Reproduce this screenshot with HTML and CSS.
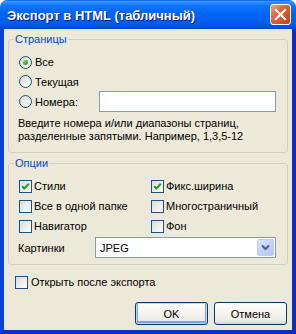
FILE: index.html
```html
<html>
<head>
    <link rel="stylesheet" href="styles.css">
</head>
<body>
    <div class="window">
        <div class="titlebar">
            <span class="title">Экспорт в HTML (табличный)</span>
            <span class="close">
                <svg width="19" height="19" viewBox="0 0 19 19">
                    <path d="M5 5 L14 14 M14 5 L5 14" stroke="#fff" stroke-width="2.2" stroke-linecap="square"/>
                </svg>
            </span>
        </div>
        <div class="frame">
            <fieldset class="group pages">
                <legend>Страницы</legend>
                <div class="rows">
                    <label class="row"><span class="radio checked"></span>Все</label>
                    <label class="row short"><span class="radio"></span>Текущая</label>
                    <div class="row tall">
                        <label class="numbers"><span class="radio"></span>Номера:</label>
                        <span class="edit"></span>
                    </div>
                </div>
                <p class="hint">Введите номера и/или диапазоны страниц,<br>разделенные запятыми. Например, 1,3,5-12</p>
            </fieldset>
            <fieldset class="group options">
                <legend>Опции</legend>
                <div class="checks">
                    <label class="row"><span class="check checked"></span>Стили</label>
                    <label class="row"><span class="check checked"></span>Фикс.ширина</label>
                    <label class="row"><span class="check"></span>Все в одной папке</label>
                    <label class="row"><span class="check"></span>Многостраничный</label>
                    <label class="row"><span class="check"></span>Навигатор</label>
                    <label class="row"><span class="check"></span>Фон</label>
                </div>
                <div class="row tall pictures">
                    <span class="pictures-label">Картинки</span>
                    <div class="combo">
                        <span class="combo-text">JPEG</span>
                        <span class="drop">
                            <svg width="15" height="15" viewBox="0 0 15 15">
                                <path d="M4 5.5 L7.5 9 L11 5.5" fill="none" stroke="#4d6185" stroke-width="2"/>
                            </svg>
                        </span>
                    </div>
                </div>
            </fieldset>
            <label class="row open"><span class="check"></span>Открыть после экспорта</label>
            <div class="buttons">
                <button class="btn default">OK</button>
                <button class="btn">Отмена</button>
            </div>
        </div>
    </div>
</body>
</html>
```
FILE: styles.css
```css
body {
    margin: 0;
    background-color: #ffffff;
    font-family: "Liberation Sans", Arial, sans-serif;
    font-size: 11px;
    color: #000;
}
.window {
    width: 296px;
    height: 334px;
    display: flex;
    flex-direction: column;
    background-color: #ece9d8;
    border-radius: 7px 7px 0 0;
    overflow: hidden;
}
.titlebar {
    height: 29px;
    flex: none;
    display: flex;
    align-items: center;
    padding: 0 5px 0 7px;
    background: linear-gradient(to bottom, #0058ee 0%, #3d95ff 5%, #2b8bff 9%, #0f74fb 20%, #0066f4 45%, #0060ef 70%, #0058e4 88%, #0046cf 100%);
}
.title {
    flex: 1;
    color: #fff;
    font-weight: bold;
    font-size: 13px;
    text-shadow: 1px 1px #0a1883;
    padding-top: 1px;
}
.close {
    width: 21px;
    height: 21px;
    box-sizing: border-box;
    border: 1px solid #fff;
    border-radius: 3px;
    background: linear-gradient(135deg, #f3a58d 0%, #e4683f 35%, #d24d26 75%, #c4401c 100%);
    display: flex;
    align-items: center;
    justify-content: center;
}
.frame {
    flex: 1;
    display: flex;
    flex-direction: column;
    border: 4px solid #0a3fd3;
    border-top: none;
    border-left-color: #0842d8;
    border-right-color: #0831c9;
    border-bottom-color: #0831c9;
}
.group {
    margin: 4px 4px 0;
    padding: 0 10px 9px 5px;
    border: 1px solid #d0d0bf;
    border-radius: 3px;
    min-width: 0;
}
.group.options {
    padding-bottom: 6px;
}
.group legend {
    color: #0046d5;
    padding: 0 1px;
    line-height: 13px;
}
.rows {
    padding-top: 6px;
}
.row {
    display: flex;
    align-items: center;
    height: 20px;
    padding-left: 5px;
    white-space: nowrap;
}
.row.short {
    height: 19px;
}
.row.tall {
    height: 21px;
}
.numbers {
    display: flex;
    align-items: center;
    width: 80px;
}
.edit {
    width: 177px;
    height: 21px;
    box-sizing: border-box;
    border: 1px solid #7f9db9;
    background-color: #fff;
}
.hint {
    margin: 5px 0 0 4px;
    line-height: 13px;
}
.radio {
    width: 13px;
    height: 13px;
    box-sizing: border-box;
    border: 1px solid #1c5180;
    border-radius: 50%;
    background: linear-gradient(135deg, #d4d3cc 0%, #f2f2ee 55%, #ffffff 100%);
    margin-right: 3px;
    display: flex;
    align-items: center;
    justify-content: center;
}
.radio.checked::after {
    content: "";
    width: 5px;
    height: 5px;
    border-radius: 50%;
    background: radial-gradient(circle at 35% 35%, #6ee06a 0%, #2bb02a 50%, #138f12 100%);
}
.check {
    width: 13px;
    height: 13px;
    box-sizing: border-box;
    border: 1px solid #1c5180;
    background: linear-gradient(135deg, #dcdcd7 0%, #f0f0ec 60%, #ffffff 100%);
    margin-right: 2px;
    flex: none;
}
.check.checked {
    background-image: url("data:image/svg+xml,%3Csvg xmlns='http://www.w3.org/2000/svg' width='11' height='11'%3E%3Cpath d='M2.2 5.2 L4.3 7.4 L8.8 2.8' fill='none' stroke='%2321a121' stroke-width='2.1'/%3E%3C/svg%3E"), linear-gradient(135deg, #dcdcd7 0%, #f0f0ec 60%, #ffffff 100%);
}
.checks {
    display: grid;
    grid-template-columns: 132px 1fr;
    grid-auto-rows: 20px;
    padding-top: 6px;
}
.pictures {
    margin-top: 1px;
    padding-left: 4px;
}
.pictures-label {
    width: 77px;
}
.combo {
    width: 181px;
    height: 21px;
    box-sizing: border-box;
    border: 1px solid #7f9db9;
    background-color: #fff;
    display: flex;
    align-items: center;
    padding: 1px;
}
.combo-text {
    flex: 1;
    padding-left: 3px;
}
.drop {
    width: 17px;
    height: 17px;
    box-sizing: border-box;
    border: 1px solid #bccef8;
    border-radius: 2px;
    background: linear-gradient(135deg, #dae5fe 0%, #c1d3fb 50%, #b2c7f7 100%);
    display: flex;
    align-items: center;
    justify-content: center;
}
.row.open {
    margin-top: 7px;
    padding-left: 11px;
}
.row.open .check {
    margin-right: 3px;
}
.buttons {
    display: flex;
    justify-content: flex-end;
    gap: 6px;
    margin-top: 10px;
    padding-right: 5px;
}
.btn {
    width: 73px;
    height: 23px;
    box-sizing: border-box;
    border: 1px solid #003c74;
    border-radius: 3px;
    background: linear-gradient(to bottom, #ffffff 0%, #f6f5f0 40%, #ecebe4 85%, #d6d0c5 100%);
    font-family: "Liberation Sans", Arial, sans-serif;
    font-size: 11px;
    color: #000;
    padding: 0;
}
.btn.default {
    box-shadow: inset 0 0 0 1px #c2d5fc, inset 0 -1px 0 2px #7e9ff0;
}
```
